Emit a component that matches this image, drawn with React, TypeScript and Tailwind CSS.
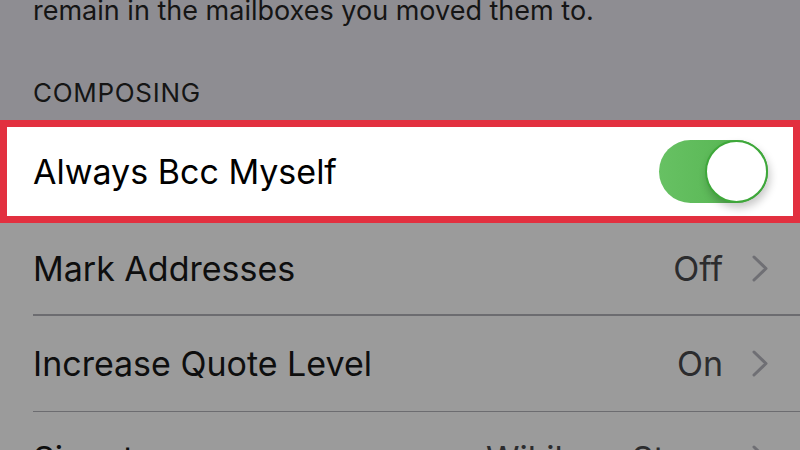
import React from 'react';

function Chevron() {
  return (
    <svg width="16" height="27" viewBox="0 0 16 27" fill="none" className="shrink-0">
      <path d="M2 2 L14 13.5 L2 25" stroke="#6f6f74" strokeWidth="3" strokeLinecap="round" strokeLinejoin="round" />
    </svg>
  );
}

function Toggle() {
  return (
    <div className="relative w-[109px] h-[63px] rounded-full bg-gradient-to-r from-[#67c163] to-[#52b24e] shrink-0">
      <div className="absolute right-0 top-0 w-[63px] h-[63px] rounded-full bg-white border-[2px] border-[#3ea83a] shadow-[2px_5px_8px_rgba(0,0,0,0.22)]" />
    </div>
  );
}

interface RowProps {
  label: string;
  value: string;
  height: string;
  last?: boolean;
}

function Row({ label, value, height, last }: RowProps) {
  return (
    <div className="flex flex-col">
      <div className={`${height} flex items-center justify-between pl-[33px] pr-[32px]`}>
        <span className="text-[34px] text-[#0e0e0e]">{label}</span>
        <div className="flex items-center gap-[29px]">
          <span className="text-[34px] text-[#2c2c2e]">{value}</span>
          <Chevron />
        </div>
      </div>
      {!last && <div className="ml-[33px] h-[1.5px] bg-[#6c6c70]" />}
    </div>
  );
}

export default function App() {
  return (
    <div className="w-[800px] h-[450px] overflow-hidden bg-[#8e8d92] font-['Inter','Liberation_Sans',sans-serif]">
      {/* section footer, first line scrolled out */}
      <p className="-mt-[5px] pl-[33px] text-[27px] leading-[32px] text-[#151515]">
        remain in the mailboxes you moved them to.
      </p>

      <h2 className="mt-[50px] pl-[33px] text-[26px] leading-[32px] tracking-[0.7px] text-[#151515]">
        COMPOSING
      </h2>

      <div className="mt-[11px] flex flex-col">
        {/* highlighted row */}
        <div className="h-[103px] border-[7px] border-[#e2303f] bg-white flex items-center justify-between pl-[26px] pr-[25px]">
          <span className="text-[34px] text-black">Always Bcc Myself</span>
          <Toggle />
        </div>

        <div className="bg-[#9b9b9b]">
          <Row label="Mark Addresses" value="Off" height="h-[91px]" />
          <Row label="Increase Quote Level" value="On" height="h-[95px]" />
          <Row label="Signature" value="Wikihow Steps" height="h-[92px]" last />
        </div>
      </div>
    </div>
  );
}
